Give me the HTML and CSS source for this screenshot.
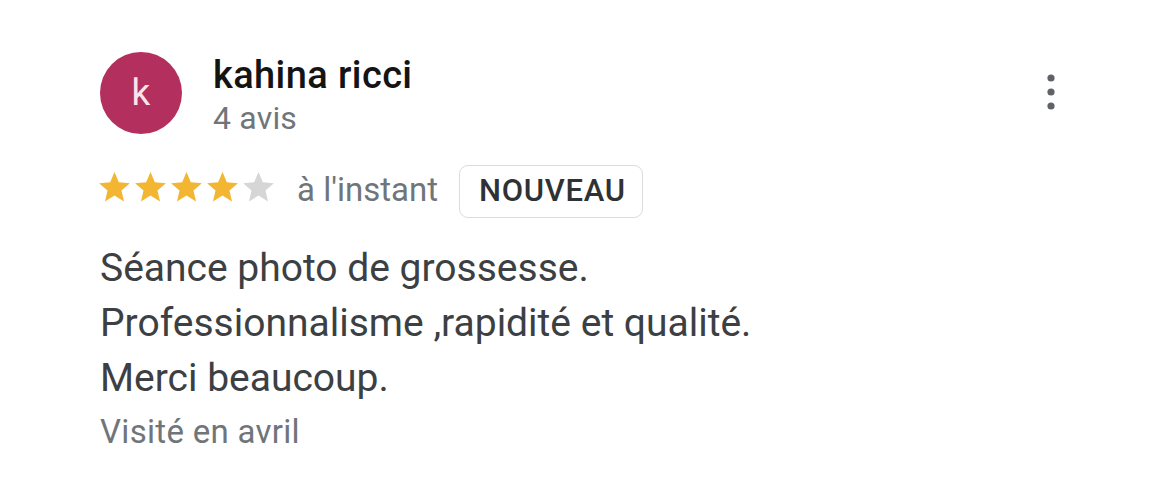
FILE: index.html
```html
<!DOCTYPE html>
<html lang="fr">
<head>
<meta charset="utf-8">
<title>Avis</title>
<link rel="stylesheet" href="styles.css">
</head>
<body>
<div class="review">
  <div class="head">
    <div class="avatar">k</div>
    <div class="who">
      <div class="name">kahina ricci</div>
      <div class="count">4 avis</div>
    </div>
    <button class="more" aria-label="Plus d'options">
      <svg width="10" height="36" viewBox="0 0 10 36"><circle cx="5" cy="4" r="3.6"/><circle cx="5" cy="18" r="3.6"/><circle cx="5" cy="32" r="3.6"/></svg>
    </button>
  </div>
  <div class="meta">
    <div class="stars">
      <svg class="star on" viewBox="0 0 24 24"><path d="M12 17.27L18.18 21l-1.64-7.03L22 9.24l-7.19-.61L12 2 9.19 8.63 2 9.24l5.46 4.73L5.82 21z"/></svg>
      <svg class="star on" viewBox="0 0 24 24"><path d="M12 17.27L18.18 21l-1.64-7.03L22 9.24l-7.19-.61L12 2 9.19 8.63 2 9.24l5.46 4.73L5.82 21z"/></svg>
      <svg class="star on" viewBox="0 0 24 24"><path d="M12 17.27L18.18 21l-1.64-7.03L22 9.24l-7.19-.61L12 2 9.19 8.63 2 9.24l5.46 4.73L5.82 21z"/></svg>
      <svg class="star on" viewBox="0 0 24 24"><path d="M12 17.27L18.18 21l-1.64-7.03L22 9.24l-7.19-.61L12 2 9.19 8.63 2 9.24l5.46 4.73L5.82 21z"/></svg>
      <svg class="star off" viewBox="0 0 24 24"><path d="M12 17.27L18.18 21l-1.64-7.03L22 9.24l-7.19-.61L12 2 9.19 8.63 2 9.24l5.46 4.73L5.82 21z"/></svg>
    </div>
    <span class="time">à l'instant</span>
    <span class="badge">NOUVEAU</span>
  </div>
  <p class="text">Séance photo de grossesse.<br>Professionnalisme ,rapidité et qualité.<br>Merci beaucoup.</p>
  <div class="visit">Visité en avril</div>
</div>
</body>
</html>
```
FILE: styles.css
```css
html, body {
  margin: 0;
  padding: 0;
  background: #ffffff;
}
body {
  font-family: Roboto, "Liberation Sans", Arial, sans-serif;
  width: 1170px;
  height: 481px;
  overflow: hidden;
}
.review {
  padding: 52px 107px 0 100px;
  display: flex;
  flex-direction: column;
}
.head {
  display: flex;
  align-items: flex-start;
  height: 82px;
}
.avatar {
  width: 82px;
  height: 82px;
  border-radius: 50%;
  background: #b3305e;
  color: #fbe3ec;
  font-size: 37px;
  line-height: 82px;
  text-align: center;
  flex: none;
}
.who {
  margin-left: 31px;
  padding-top: 1px;
  display: flex;
  flex-direction: column;
}
.name {
  font-size: 38px;
  font-weight: 500;
  line-height: 44px;
  letter-spacing: 0.4px;
  color: #141414;
}
.count {
  margin-top: 2px;
  font-size: 32px;
  line-height: 38px;
  letter-spacing: 0.2px;
  color: #70757a;
}
.more {
  margin-left: auto;
  margin-top: 22px;
  padding: 0 7px;
  border: 0;
  background: none;
  display: flex;
}
.more svg {
  fill: #5f6368;
}
.meta {
  margin-top: 31px;
  height: 53px;
  display: flex;
  align-items: center;
}
.stars {
  display: flex;
  margin-left: -4px;
  margin-bottom: 8px;
}
.star {
  width: 37px;
  height: 37px;
  margin-right: -1px;
}
.star.on { fill: #f3b632; }
.star.off { fill: #d6d6d6; }
.time {
  margin-left: 21px;
  margin-bottom: 3px;
  font-size: 33px;
  line-height: 40px;
  color: #70757a;
}
.badge {
  margin-left: 21px;
  box-sizing: border-box;
  height: 53px;
  padding: 0 16px 0 19px;
  border: 1.5px solid #dadce0;
  border-radius: 9px;
  font-size: 31px;
  font-weight: 500;
  line-height: 50px;
  letter-spacing: 0.7px;
  color: #2f3235;
}
.text {
  margin: 23px 0 0;
  font-size: 39px;
  line-height: 55px;
  color: #3c4043;
}
.visit {
  margin-top: 6px;
  font-size: 33px;
  line-height: 40px;
  letter-spacing: 0.3px;
  color: #70757a;
}
```
